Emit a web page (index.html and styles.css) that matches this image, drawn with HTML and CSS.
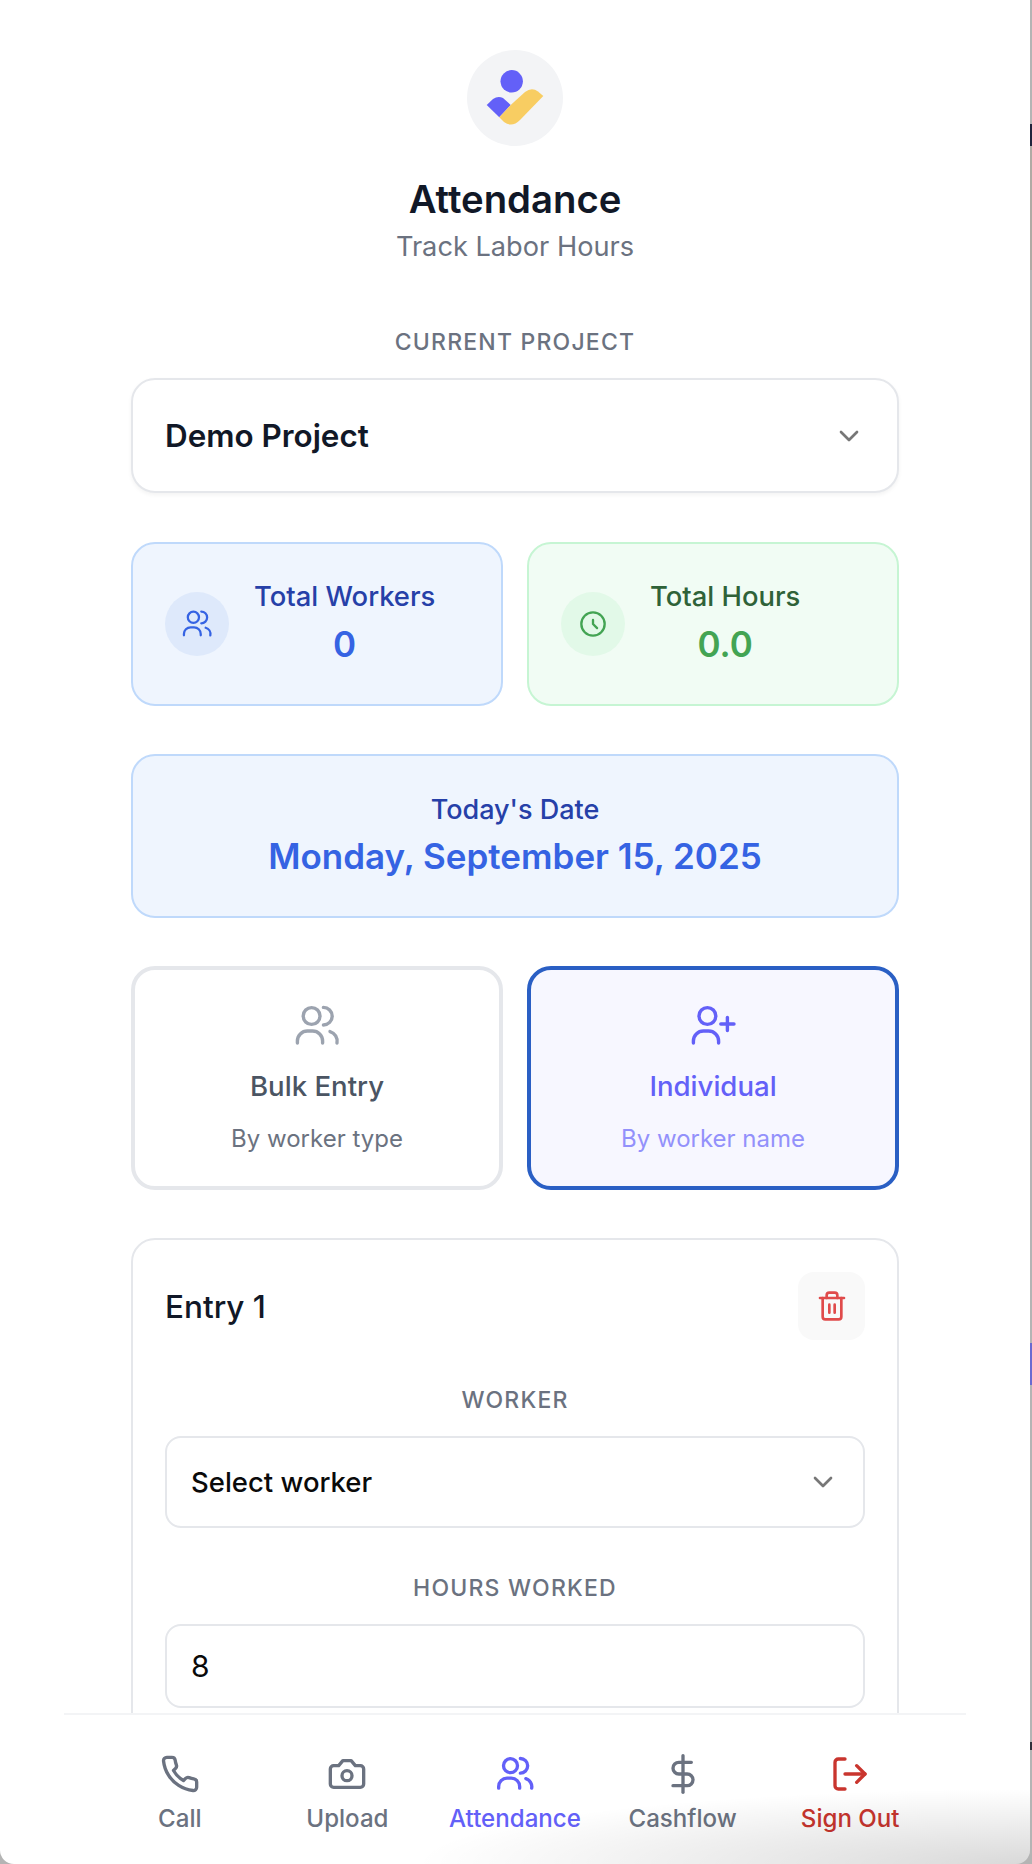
FILE: index.html
```html
<!DOCTYPE html>
<html lang="en">
<head>
    <meta charset="UTF-8">
    <meta name="viewport" content="width=device-width, initial-scale=1.0">
    <title>Attendance</title>
    <link rel="stylesheet" href="styles.css">
</head>
<body>
    <div class="screen">
        <main class="content">
            <header class="page-head">
                <div class="logo">
                    <svg width="96" height="96" viewBox="0 0 96 96">
                        <circle cx="44.7" cy="31.3" r="11.2" fill="#6360f8"/>
                        <path d="M19.7 55L26 49Q31 45.500 36 48L43.700 55L32.300 67.300Z" fill="#6360f8"/>
                        <path d="M32.300 67.300L43.700 55L58 42Q64.700 37 71 41.500L76.300 46L53 70Q45 78 37 72Z" fill="#f8cd62"/>
                    </svg>
                </div>
                <h1>Attendance</h1>
                <p>Track Labor Hours</p>
            </header>

            <div class="field-label first">CURRENT PROJECT</div>
            <div class="project-select">
                <span>Demo Project</span>
                <svg class="chevron" width="32" height="32" viewBox="0 0 24 24"><polyline points="6 9 12 15 18 9"/></svg>
            </div>

            <div class="two-col stats">
                <div class="stat-card blue">
                    <div class="stat-icon">
                        <svg class="icon" width="32" height="32" viewBox="0 0 24 24" stroke-width="1.7">
                            <circle cx="9.300" cy="7" r="4.200"/>
                            <path d="M15.200 2.700a4.400 4.400 0 0 1 0 8.800"/>
                            <path d="M2.200 20.500v-1a5 5 0 0 1 5-5h2.600a5 5 0 0 1 5 5v1"/>
                            <path d="M18.500 14.800a5 5 0 0 1 3.500 5.700"/>
                        </svg>
                    </div>
                    <div class="stat-text">
                        <div class="stat-title">Total Workers</div>
                        <div class="stat-value">0</div>
                    </div>
                </div>
                <div class="stat-card green">
                    <div class="stat-icon">
                        <svg class="icon" width="28" height="28" viewBox="0 0 24 24" stroke-width="2">
                            <circle cx="12" cy="12" r="10"/>
                            <polyline points="12 8.500 12 12 15.500 15.500"/>
                        </svg>
                    </div>
                    <div class="stat-text">
                        <div class="stat-title">Total Hours</div>
                        <div class="stat-value">0.0</div>
                    </div>
                </div>
            </div>

            <div class="date-card">
                <div class="date-label">Today's Date</div>
                <div class="date-value">Monday, September 15, 2025</div>
            </div>

            <div class="two-col modes">
                <div class="mode-card">
                    <svg class="icon" width="48" height="48" viewBox="0 0 24 24" stroke-width="1.7">
                        <circle cx="9.300" cy="7" r="4.200"/>
                        <path d="M15.200 2.700a4.400 4.400 0 0 1 0 8.800"/>
                        <path d="M2.200 20.500v-1a5 5 0 0 1 5-5h2.600a5 5 0 0 1 5 5v1"/>
                        <path d="M18.500 14.800a5 5 0 0 1 3.500 5.700"/>
                    </svg>
                    <div class="mode-title">Bulk Entry</div>
                    <div class="mode-sub">By worker type</div>
                </div>
                <div class="mode-card active">
                    <svg class="icon" width="48" height="48" viewBox="0 0 24 24" stroke-width="1.7">
                        <circle cx="9.200" cy="7" r="4.200"/>
                        <path d="M2.200 20.500v-1a5 5 0 0 1 5-5h2.600a5 5 0 0 1 5 5v1"/>
                        <path d="M19.200 7.700v6.600M15.900 11h6.600"/>
                    </svg>
                    <div class="mode-title">Individual</div>
                    <div class="mode-sub">By worker name</div>
                </div>
            </div>

            <section class="entry-card">
                <div class="entry-head">
                    <h2>Entry 1</h2>
                    <div class="delete-btn">
                        <svg class="icon" width="32" height="32" viewBox="0 0 24 24" stroke-width="2">
                            <path d="M3 6h18"/>
                            <path d="M19 6v14a2 2 0 0 1-2 2H7a2 2 0 0 1-2-2V6m3 0V4a2 2 0 0 1 2-2h4a2 2 0 0 1 2 2v2"/>
                            <path d="M10 11v6M14 11v6"/>
                        </svg>
                    </div>
                </div>
                <div class="field-label">WORKER</div>
                <div class="entry-select">
                    <span>Select worker</span>
                    <svg class="chevron" width="32" height="32" viewBox="0 0 24 24"><polyline points="6 9 12 15 18 9"/></svg>
                </div>
                <div class="field-label">HOURS WORKED</div>
                <div class="entry-input">8</div>
            </section>
        </main>

        <nav class="bottom-nav">
            <div class="nav-item">
                <svg class="icon" width="40" height="40" viewBox="0 0 24 24" stroke-width="2">
                    <path d="M22 16.920v3a2 2 0 0 1-2.180 2 19.790 19.790 0 0 1-8.630-3.070 19.500 19.500 0 0 1-6-6 19.790 19.790 0 0 1-3.070-8.670A2 2 0 0 1 4.110 2h3a2 2 0 0 1 2 1.720 12.840 12.840 0 0 0 .7 2.810 2 2 0 0 1-.45 2.110L8.090 9.910a16 16 0 0 0 6 6l1.270-1.270a2 2 0 0 1 2.110-.45 12.840 12.840 0 0 0 2.810.7A2 2 0 0 1 22 16.920z"/>
                </svg>
                <span>Call</span>
            </div>
            <div class="nav-item">
                <svg class="icon" width="40" height="40" viewBox="0 0 24 24" stroke-width="2">
                    <path d="M14.500 4h-5L7 7H4a2 2 0 0 0-2 2v9a2 2 0 0 0 2 2h16a2 2 0 0 0 2-2V9a2 2 0 0 0-2-2h-3l-2.500-3z"/>
                    <circle cx="12" cy="13" r="3"/>
                </svg>
                <span>Upload</span>
            </div>
            <div class="nav-item active">
                <svg class="icon" width="40" height="40" viewBox="0 0 24 24" stroke-width="2">
                    <circle cx="9.300" cy="7" r="4.200"/>
                    <path d="M15.200 2.700a4.400 4.400 0 0 1 0 8.800"/>
                    <path d="M2.200 20.500v-1a5 5 0 0 1 5-5h2.600a5 5 0 0 1 5 5v1"/>
                    <path d="M18.500 14.800a5 5 0 0 1 3.500 5.700"/>
                </svg>
                <span>Attendance</span>
            </div>
            <div class="nav-item">
                <svg class="icon" width="40" height="40" viewBox="0 0 24 24" stroke-width="2">
                    <path d="M12 1v22"/>
                    <path d="M17 5H9.500a3.500 3.500 0 0 0 0 7h5a3.500 3.500 0 0 1 0 7H6"/>
                </svg>
                <span>Cashflow</span>
            </div>
            <div class="nav-item danger">
                <svg class="icon" width="40" height="40" viewBox="0 0 24 24" stroke-width="2">
                    <path d="M9 21H5a2 2 0 0 1-2-2V5a2 2 0 0 1 2-2h4"/>
                    <polyline points="16 17 21 12 16 7"/>
                    <path d="M21 12H9"/>
                </svg>
                <span>Sign Out</span>
            </div>
        </nav>
    </div>
</body>
</html>
```

FILE: styles.css
```css
/* --- General --- */
* {
    box-sizing: border-box;
}

html, body {
    margin: 0;
    height: 100%;
}

body {
    font-family: 'Inter', 'Noto Sans', sans-serif;
    color: #111827;
    overflow: hidden;
    /* bits of the window behind show at the right edge */
    background: linear-gradient(to bottom,
        #b4b4b4 0, #b4b4b4 124px,
        #20243c 124px, #20243c 146px,
        #b0aaa4 146px, #b0aaa4 270px,
        #b4b4b4 270px, #b4b4b4 1343px,
        #6a6ad0 1343px, #6a6ad0 1385px,
        #b4b4b4 1385px, #b4b4b4 1742px,
        #30303a 1742px, #30303a 1750px,
        #b4b4b4 1750px);
}

.screen {
    position: relative;
    width: 1030px;
    height: 1864px;
    background: #fff;
    border-radius: 0 0 14px 14px;
    display: flex;
    flex-direction: column;
    overflow: hidden;
}

.screen::after {
    content: '';
    position: absolute;
    right: 0;
    bottom: 0;
    width: 620px;
    height: 76px;
    background: radial-gradient(ellipse at 100% 100%, rgba(0, 0, 0, 0.15), rgba(0, 0, 0, 0) 70%);
    pointer-events: none;
}

.content {
    flex: 1;
    min-height: 0;
    overflow: hidden;
    padding: 50px 131px 0;
}

.icon, .chevron {
    fill: none;
    stroke: currentColor;
    stroke-linecap: round;
    stroke-linejoin: round;
}

.chevron {
    stroke: #777;
    stroke-width: 2;
    flex-shrink: 0;
}

/* --- Header --- */
.page-head {
    text-align: center;
}

.logo {
    width: 96px;
    height: 96px;
    margin: 0 auto;
    border-radius: 50%;
    background: #f3f4f6;
}

.logo svg {
    display: block;
}

h1 {
    font-size: 38.3px;
    font-weight: 600;
    line-height: 46px;
    margin: 30px 0 0;
    color: #111827;
}

.page-head p {
    font-size: 27.2px;
    line-height: 34px;
    margin: 8px 0 0;
    color: #6b7280;
}

.field-label {
    font-size: 23px;
    font-weight: 500;
    line-height: 28px;
    letter-spacing: 1.2px;
    text-align: center;
    color: #6b7280;
    margin-top: 46px;
    margin-bottom: 22px;
}

.field-label.first {
    margin-top: 64px;
}

/* --- Project select --- */
.project-select {
    height: 115px;
    padding: 0 32px;
    display: flex;
    align-items: center;
    justify-content: space-between;
    background: #fff;
    border: 2px solid #e5e7eb;
    border-radius: 24px;
    box-shadow: 0 2px 4px rgba(0, 0, 0, 0.05);
    font-size: 31.4px;
    font-weight: 600;
}

/* --- Cards --- */
.two-col {
    display: grid;
    grid-template-columns: 1fr 1fr;
    gap: 24px;
}

.stats {
    margin-top: 49px;
}

.stat-card {
    height: 164px;
    padding: 0 32px;
    display: flex;
    align-items: center;
    gap: 25px;
    border: 2px solid;
    border-radius: 24px;
}

.stat-card.blue {
    background: #eff5fe;
    border-color: #bfd9fb;
    color: #3563e3;
}

.stat-card.green {
    background: #f1fcf4;
    border-color: #c6f5d3;
    color: #43a453;
}

.stat-icon {
    width: 64px;
    height: 64px;
    border-radius: 50%;
    flex-shrink: 0;
    display: flex;
    align-items: center;
    justify-content: center;
}

.blue .stat-icon {
    background: #dee9fb;
}

.green .stat-icon {
    background: #e2f9e8;
}

.stat-text {
    text-align: center;
    padding-bottom: 4px;
}

.stat-title {
    font-size: 27.4px;
    font-weight: 500;
    line-height: 34px;
}

.blue .stat-title {
    color: #2640a8;
}

.green .stat-title {
    color: #2f6238;
}

.stat-value {
    font-size: 35px;
    font-weight: 600;
    line-height: 42px;
    margin-top: 10px;
}

.date-card {
    height: 164px;
    margin-top: 48px;
    display: flex;
    flex-direction: column;
    justify-content: center;
    text-align: center;
    background: #eff5fe;
    border: 2px solid #bfd9fb;
    border-radius: 24px;
}

.date-label {
    font-size: 27px;
    font-weight: 500;
    line-height: 32px;
    color: #2640a8;
}

.date-value {
    font-size: 35px;
    font-weight: 600;
    line-height: 44px;
    margin-top: 8px;
    color: #3563e3;
}

/* --- Entry mode --- */
.modes {
    margin-top: 48px;
}

.mode-card {
    height: 224px;
    padding-top: 32px;
    display: flex;
    flex-direction: column;
    align-items: center;
    background: #fff;
    border: 4px solid #e5e7eb;
    border-radius: 24px;
    color: #9ca3af;
}

.mode-card.active {
    background: #f7f7ff;
    border-color: #2a5fc4;
    color: #6360f8;
}

.mode-title {
    font-size: 27.6px;
    font-weight: 500;
    line-height: 34px;
    margin-top: 19px;
    color: #4b5563;
}

.mode-sub {
    font-size: 24px;
    line-height: 28px;
    margin-top: 22px;
    color: #6b7280;
}

.active .mode-title {
    color: #6360f8;
}

.active .mode-sub {
    color: #9391fb;
}

/* --- Entry card --- */
.entry-card {
    margin-top: 48px;
    padding: 32px;
    border: 2px solid #e5e7eb;
    border-radius: 24px;
}

.entry-head {
    display: flex;
    align-items: center;
    justify-content: space-between;
}

h2 {
    font-size: 31.5px;
    font-weight: 500;
    margin: 0;
    color: #111827;
}

.delete-btn {
    width: 67px;
    height: 68px;
    border-radius: 16px;
    background: #f9f9f9;
    color: #e04b4b;
    display: flex;
    align-items: center;
    justify-content: center;
}

.entry-select, .entry-input {
    padding: 0 24px;
    display: flex;
    align-items: center;
    justify-content: space-between;
    border: 2px solid #e5e7eb;
    border-radius: 16px;
    color: #0a0a0a;
}

.entry-select {
    height: 92px;
    font-size: 27.5px;
    font-weight: 500;
}

.entry-input {
    height: 84px;
    font-size: 30px;
}

/* --- Bottom nav --- */
.bottom-nav {
    height: 151px;
    margin: 0 64px;
    padding: 39px 32px 0;
    display: flex;
    flex-shrink: 0;
    background: #fff;
    border-top: 2px solid #f3f4f6;
}

.nav-item {
    flex: 1;
    display: flex;
    flex-direction: column;
    align-items: center;
    color: #6b7280;
}

.nav-item span {
    font-size: 24.1px;
    font-weight: 500;
    line-height: 27px;
    margin-top: 11px;
}

.nav-item.active {
    color: #6360f8;
}

.nav-item.danger {
    color: #c9352e;
}
```
